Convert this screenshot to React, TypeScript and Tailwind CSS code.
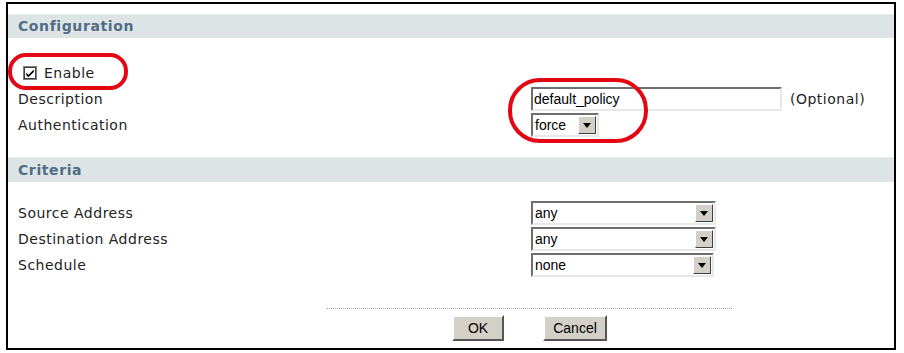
import React from "react";

function Arrow() {
  return (
    <div className="w-[18px] h-full bg-[#d4d0c8] border border-t-white border-l-white border-r-[#404040] border-b-[#404040] flex items-center justify-center">
      <svg width="8" height="5" viewBox="0 0 8 5"><path d="M0 0h8L4 5z" fill="#000" /></svg>
    </div>
  );
}

function Select({ value, width }: { value: string; width: number }) {
  return (
    <div
      className="h-[24px] flex items-stretch bg-white border-2 border-t-[#6e6e6e] border-l-[#6e6e6e] border-r-[#e8e8e8] border-b-[#e8e8e8] font-['Liberation_Sans',sans-serif] text-[14px] text-black"
      style={{ width }}
    >
      <div className="flex-1 flex items-center pl-[2px] leading-none">{value}</div>
      <div className="p-[1px] h-full"><Arrow /></div>
    </div>
  );
}

function Button({ label, width, ml }: { label: string; width: string; ml: string }) {
  return (
    <div className={`${width} ${ml} h-[26px] bg-[#d4d0c8] border-2 border-t-white border-l-white border-r-[#555] border-b-[#555] flex items-center justify-center font-['Liberation_Sans',sans-serif] text-[14px] text-black`}>
      {label}
    </div>
  );
}

export default function App() {
  const label = "w-[523px] pl-[10px] text-[14px] tracking-[0.5px] text-[#222]";
  return (
    <div className="w-[904px] h-[353px] bg-white relative pt-[2px] pl-[6px] font-['DejaVu_Sans',sans-serif]">
      <div className="w-[890px] h-[348px] border-2 border-black flex flex-col">
        <div className="mt-[10px] h-[24px] bg-[#dde4e6] border-t border-t-[#e9eef0] pl-[10px] flex items-center text-[14px] tracking-[0.6px] font-bold text-[#4f6d84]">
          Configuration
        </div>
        <div className="mt-[22px] flex flex-col">
          <div className="h-[26px] flex items-center pl-[15px] text-[14px] tracking-[0.5px] text-[#222]">
            <svg width="14" height="14" viewBox="0 0 14 14" className="mr-[7px]">
              <rect x="0.5" y="0.5" width="13" height="13" fill="#fff" stroke="#808080" />
              <rect x="1.5" y="1.5" width="11" height="11" fill="none" stroke="#404040" />
              <path d="M3.2 6.6l2.2 2.3L10.8 3.5v2.4L5.4 11.2 3.2 8.9z" fill="#000" />
            </svg>
            Enable
          </div>
          <div className="h-[26px] flex items-center">
            <div className={label}>Description</div>
            <div className="h-[24px] w-[251px] bg-white border-2 border-t-[#6e6e6e] border-l-[#6e6e6e] border-r-[#e8e8e8] border-b-[#e8e8e8] flex items-center pl-[1px] font-['Liberation_Sans',sans-serif] text-[14px] text-black leading-none">
              default_policy
            </div>
            <div className="ml-[8px] text-[14px] tracking-[0.5px] text-[#222]">(Optional)</div>
          </div>
          <div className="h-[26px] flex items-center">
            <div className={label}>Authentication</div>
            <Select value="force" width={68} />
          </div>
        </div>
        <div className="mt-[19px] h-[25px] bg-[#dde4e6] border-t border-t-[#e9eef0] pl-[10px] flex items-center text-[14px] tracking-[0.6px] font-bold text-[#4f6d84]">
          Criteria
        </div>
        <div className="mt-[18px] flex flex-col">
          <div className="h-[26px] flex items-center">
            <div className={label}>Source Address</div>
            <Select value="any" width={185} />
          </div>
          <div className="h-[26px] flex items-center">
            <div className={label}>Destination Address</div>
            <Select value="any" width={185} />
          </div>
          <div className="h-[26px] flex items-center">
            <div className={label}>Schedule</div>
            <Select value="none" width={183} />
          </div>
        </div>
        <div className="mt-[30px] ml-[319px] w-[405px] border-t border-dotted border-t-[#9a9a9a]" />
        <div className="mt-[6px] flex">
          <Button label="OK" width="w-[52px]" ml="ml-[444px]" />
          <Button label="Cancel" width="w-[64px]" ml="ml-[39px]" />
        </div>
      </div>
      <div className="absolute left-[8px] top-[53px] w-[120px] h-[37px] border-[4px] border-[#e30613] rounded-[18px]" />
      <div className="absolute left-[508px] top-[78px] w-[140px] h-[65px] border-[4px] border-[#e30613] rounded-[32px]" />
    </div>
  );
}
